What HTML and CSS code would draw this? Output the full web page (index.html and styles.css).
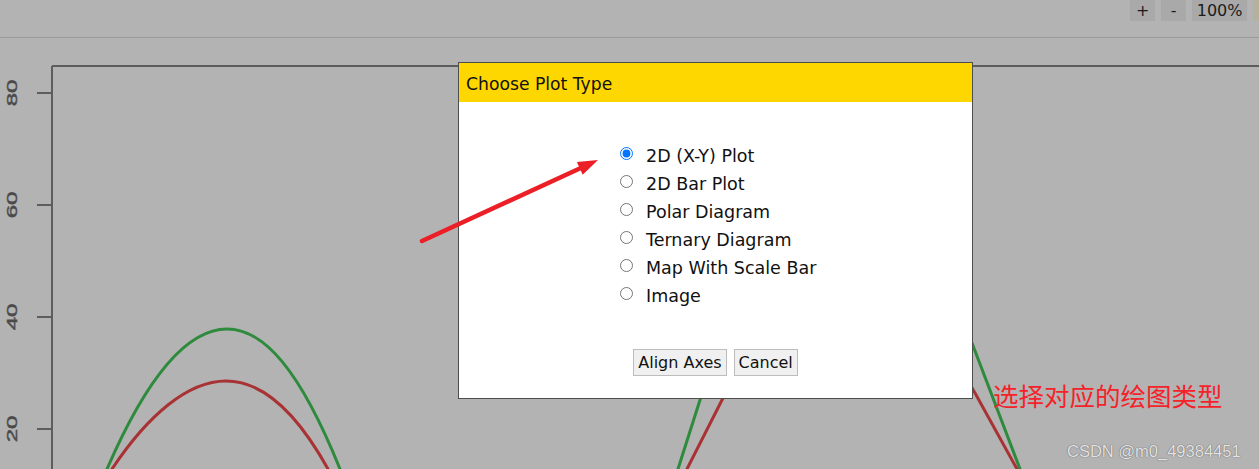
FILE: index.html
```html
<!DOCTYPE html>
<html lang="en">
<head>
<meta charset="utf-8">
<title>Choose Plot Type</title>
<link rel="stylesheet" href="styles.css">
</head>
<body>
<div class="page">
  <header class="toolbar">
    <span class="tb-btn">+</span>
    <span class="tb-btn">-</span>
    <span class="tb-btn">100%</span>
    <span class="tb-sliver"></span>
  </header>
  <svg class="chart" viewBox="0 38 1259 431" width="1259" height="431">
    <g class="frame">
      <path d="M52,66 H1270 M52,66 V480"/>
      <path d="M37,93 H52 M37,205 H52 M37,317 H52 M37,429 H52"/>
    </g>
    <g class="ticks">
      <text transform="translate(17,93) rotate(-90) scale(1,0.58)">80</text>
      <text transform="translate(17,205) rotate(-90) scale(1,0.58)">60</text>
      <text transform="translate(17,317) rotate(-90) scale(1,0.58)">40</text>
      <text transform="translate(17,429) rotate(-90) scale(1,0.58)">20</text>
    </g>
    <path class="curve green" d="M95,500 L107,469 C150,370 190,329 227,329 C264,329 300,370 340,469 L352,500"/>
    <path class="curve red" d="M99,500 L112,469 C148,415 188,381 226,381 C264,381 298,415 328,469 L341,495"/>
    <path class="curve green" d="M668,500 L678,469 L700,400 C740,270 780,220 830,220 C890,220 940,270 972,343 L1020,469 L1032,500"/>
    <path class="curve red" d="M677,500 L687,469 L722,400 C765,320 800,290 845,290 C900,290 945,340 975,393 L1017,469 L1033,500"/>
  </svg>
</div>

<div class="dialog">
  <div class="dialog-title">Choose Plot Type</div>
  <div class="dialog-body">
    <div class="options">
      <label class="option"><input type="radio" name="plot" checked><span>2D (X-Y) Plot</span></label>
      <label class="option"><input type="radio" name="plot"><span>2D Bar Plot</span></label>
      <label class="option"><input type="radio" name="plot"><span>Polar Diagram</span></label>
      <label class="option"><input type="radio" name="plot"><span>Ternary Diagram</span></label>
      <label class="option"><input type="radio" name="plot"><span>Map With Scale Bar</span></label>
      <label class="option"><input type="radio" name="plot"><span>Image</span></label>
    </div>
    <div class="actions">
      <button class="btn" type="button">Align Axes</button>
      <button class="btn" type="button">Cancel</button>
    </div>
  </div>
</div>

<svg class="arrow" width="1259" height="469" viewBox="0 0 1259 469">
  <line x1="422" y1="241" x2="583" y2="167" />
  <polygon points="598,160 576.9,162 582.7,174.8"/>
</svg>

<div class="note">选择对应的绘图类型</div>
<div class="watermark">CSDN @m0_49384451</div>
</body>
</html>
```

FILE: styles.css
```css
html, body {
  margin: 0;
  padding: 0;
}
body {
  width: 1259px;
  height: 469px;
  overflow: hidden;
  background: #b3b3b3;
  position: relative;
  font-family: "DejaVu Sans", Verdana, sans-serif;
}
.page {
  display: flex;
  flex-direction: column;
}
.toolbar {
  height: 37px;
  border-bottom: 1px solid #9b9b9b;
  display: flex;
  justify-content: flex-end;
  align-items: flex-start;
  gap: 6px;
  overflow: hidden;
}
.tb-btn {
  min-width: 25px;
  height: 21px;
  line-height: 21px;
  padding: 0 4.5px;
  box-sizing: border-box;
  text-align: center;
  background: #a9a9a9;
  color: #1c1c1c;
  font-size: 16px;
}
.tb-sliver {
  width: 6px;
  height: 21px;
  background: #b4b29c;
}
.chart {
  display: block;
}
.frame path {
  fill: none;
  stroke: #5d5d5d;
  stroke-width: 2;
}
.ticks text {
  font-family: "Liberation Sans", Arial, sans-serif;
  font-size: 24px;
  fill: #4a4a4a;
  stroke: #4a4a4a;
  stroke-width: 0.7;
  text-anchor: middle;
}
.curve {
  fill: none;
  stroke-width: 3;
  stroke-linejoin: round;
}
.curve.green { stroke: #2e8a3c; }
.curve.red { stroke: #a83234; }

.dialog {
  position: absolute;
  left: 458px;
  top: 62px;
  width: 513px;
  height: 335px;
  border: 1px solid #4d4d4d;
  background: #ffffff;
  display: flex;
  flex-direction: column;
}
.dialog-title {
  background: #ffd700;
  height: 36px;
  line-height: 36px;
  padding: 3px 0 0 7px;
  font-size: 17.2px;
  color: #111;
}
.dialog-body {
  flex: 1;
  display: flex;
  flex-direction: column;
  padding-top: 40px;
}
.options {
  display: flex;
  flex-direction: column;
  padding-left: 161px;
}
.option {
  display: flex;
  align-items: flex-start;
  gap: 13px;
  height: 28px;
  line-height: 28px;
  font-size: 17.5px;
  color: #111;
}
.option input {
  width: 13px;
  height: 13px;
  margin: 5px 0 0 0;
  flex: none;
}
.actions {
  display: flex;
  justify-content: center;
  gap: 7px;
  margin-top: 39px;
}
.btn {
  font-family: "DejaVu Sans", Verdana, sans-serif;
  font-size: 16px;
  line-height: normal;
  padding: 3px 4px;
  border: 1px solid #bdbdbd;
  background: #f0f0f0;
  color: #111;
  border-radius: 0;
}

.arrow {
  position: absolute;
  left: 0;
  top: 0;
  pointer-events: none;
}
.arrow line {
  stroke: #ec1f27;
  stroke-width: 4.5;
  stroke-linecap: round;
}
.arrow polygon {
  fill: #ec1f27;
}

.note {
  position: absolute;
  left: 993px;
  top: 382px;
  font-family: "Noto Sans CJK SC", sans-serif;
  font-size: 25.5px;
  line-height: 25px;
  color: #f5222a;
  white-space: nowrap;
}
.watermark {
  position: absolute;
  left: 1067px;
  top: 443px;
  font-family: "Liberation Sans", Arial, sans-serif;
  font-size: 16.5px;
  line-height: 1;
  color: rgba(250, 250, 250, 0.85);
  text-shadow: 0 0 1px #6a6a6a, 0 0 1px #6a6a6a;
  white-space: nowrap;
}
```
